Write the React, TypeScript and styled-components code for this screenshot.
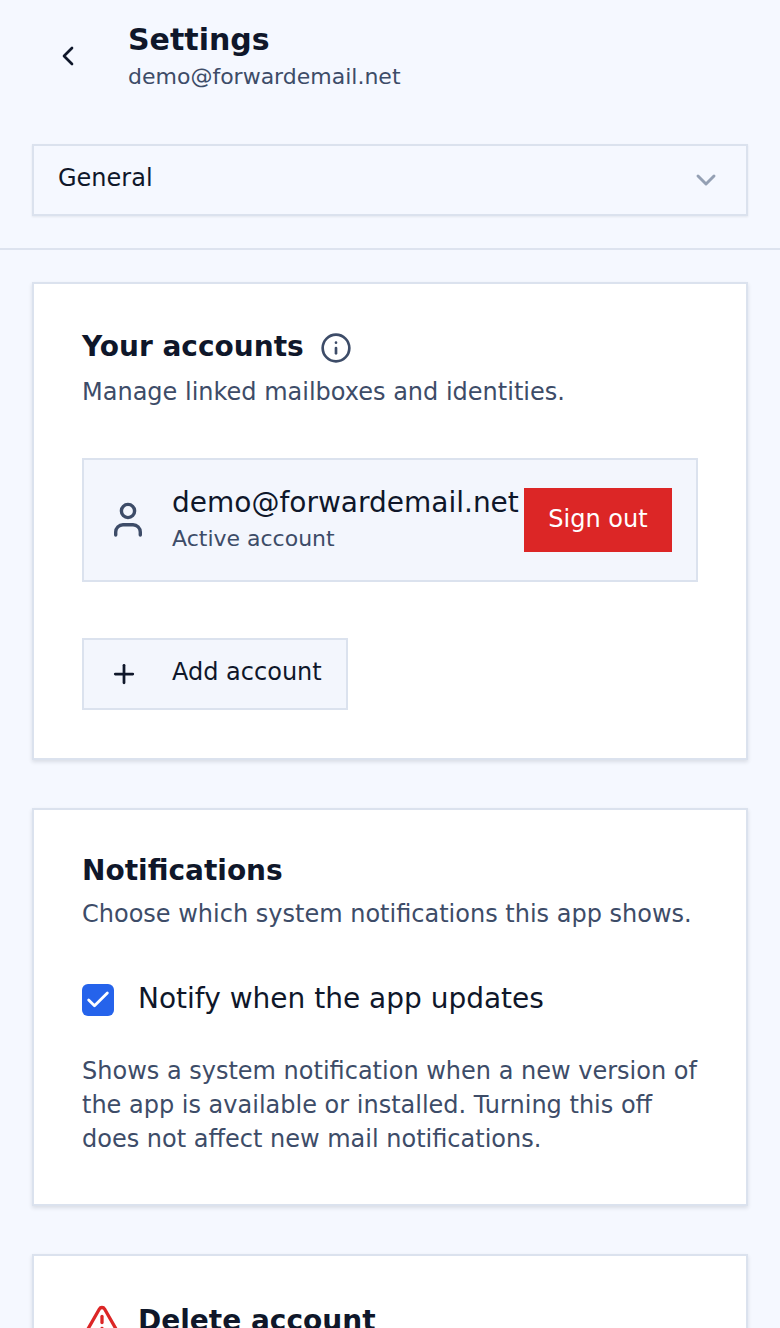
import * as React from 'react';
import styled, { createGlobalStyle } from 'styled-components';
import { ChevronDown, ChevronLeft, Info, Plus, TriangleAlert, Check } from 'lucide-react';

const GlobalStyle = createGlobalStyle`
  html, body {
    margin: 0;
    height: 100%;
    overflow: hidden;
    background: #f5f8ff;
    font-family: 'DejaVu Sans', sans-serif;
  }
  * { box-sizing: border-box; }
`;

const Root = styled.div`
  height: 1328px;
  overflow: hidden;
  background: #f5f8ff;
  color: #0f172a;
`;

const Header = styled.header`
  display: flex;
  align-items: flex-start;
  height: 144px;
  padding: 21px 0 0 48px;
`;

const BackButton = styled.button`
  width: 40px;
  height: 40px;
  margin-top: 15px;
  margin-right: 40px;
  padding: 0;
  display: flex;
  align-items: center;
  justify-content: center;
  background: none;
  border: 0;
  color: #0f172a;
`;

const HeaderText = styled.div`
  display: flex;
  flex-direction: column;
`;

const PageTitle = styled.h1`
  margin: 0;
  font-size: 30px;
  line-height: 38px;
  font-weight: 700;
`;

const PageSubtitle = styled.div`
  margin-top: 2px;
  font-size: 22px;
  line-height: 32px;
  color: #3d4c68;
`;

const SelectBar = styled.div`
  padding: 0 32px 32px;
  border-bottom: 2px solid #dde3ef;
`;

const Select = styled.div`
  height: 72px;
  padding: 0 24px 0 24px;
  display: flex;
  align-items: center;
  justify-content: space-between;
  border: 2px solid #dbe2ee;
  box-shadow: 0 1px 2px rgba(15, 23, 42, 0.08);
  font-size: 24px;
  color: #0f172a;
`;

const SelectValue = styled.span`
  padding-bottom: 4px;
`;

const Content = styled.main`
  display: flex;
  flex-direction: column;
  gap: 48px;
  padding: 32px;
`;

const Card = styled.section`
  padding: 39px 48px 48px;
  background: #fff;
  border: 2px solid #dbe2ee;
  box-shadow: 0 2px 4px rgba(15, 23, 42, 0.12);
`;

const TitleRow = styled.div`
  margin: 2px 0 6px;
  display: flex;
  align-items: center;
  gap: 16px;
`;

const InfoIcon = styled(Info)`
  margin-top: 2px;
`;

const CardTitle = styled.h2`
  margin: 0;
  font-size: 28px;
  line-height: 44px;
  font-weight: 700;
  color: #0f172a;
`;

const CardDescription = styled.p`
  margin: 4px 0 0;
  font-size: 24px;
  line-height: 34px;
  color: #3d4c68;
`;

const AccountRow = styled.div`
  margin-top: 49px;
  height: 124px;
  padding: 0 24px 0 28px;
  display: flex;
  align-items: center;
  background: #f3f6fd;
  border: 2px solid #dbe2ee;
`;

const AccountIcon = styled.svg`
  flex: none;
  width: 32px;
  height: 40px;
  margin-right: 28px;
  color: #3d4c68;
`;

const AccountText = styled.div`
  flex: 1;
  min-width: 0;
  padding-bottom: 2px;
  white-space: nowrap;
`;

const AccountEmail = styled.div`
  font-size: 28px;
  line-height: 40px;
  color: #0f172a;
`;

const AccountStatus = styled.div`
  font-size: 22px;
  line-height: 32px;
  color: #3d4c68;
`;

const SignOutButton = styled.button`
  flex: none;
  width: 148px;
  height: 64px;
  padding: 0 0 3px;
  border: 0;
  background: #dc2626;
  color: #fff;
  font: inherit;
  font-size: 24px;
`;

const AddAccountButton = styled.button`
  margin-top: 56px;
  width: 266px;
  height: 72px;
  padding: 0 0 0 25px;
  display: flex;
  align-items: center;
  gap: 33px;
  background: #f3f6fd;
  border: 2px solid #dbe2ee;
  color: #0f172a;
  font: inherit;
  font-size: 24px;
`;

const AddAccountLabel = styled.span`
  padding-bottom: 4px;
`;

const CheckRow = styled.label`
  margin-top: 48px;
  display: flex;
  align-items: center;
  gap: 24px;
  font-size: 28px;
  line-height: 40px;
  color: #0f172a;
`;

const CheckLabel = styled.span`
  padding-bottom: 2px;
`;

const CheckBox = styled.span`
  width: 32px;
  height: 32px;
  display: flex;
  align-items: center;
  justify-content: center;
  border-radius: 6px;
  background: #2563eb;
  color: #fff;
`;

const HelpText = styled.p`
  margin: 33px 0 0;
  font-size: 24px;
  line-height: 34px;
  color: #3d4c68;
`;

const DangerTitleRow = styled.div`
  margin: 4px 0 0 2px;
  display: flex;
  align-items: center;
  gap: 18px;
  color: #dc2626;
`;

export default function App() {
  return (
    <Root>
      <GlobalStyle />
      <Header>
        <BackButton aria-label="Back">
          <ChevronLeft size={32} strokeWidth={2} />
        </BackButton>
        <HeaderText>
          <PageTitle>Settings</PageTitle>
          <PageSubtitle>demo@forwardemail.net</PageSubtitle>
        </HeaderText>
      </Header>
      <SelectBar>
        <Select>
          <SelectValue>General</SelectValue>
          <ChevronDown size={32} strokeWidth={2.2} color="#94a0b4" />
        </Select>
      </SelectBar>
      <Content>
        <Card>
          <TitleRow>
            <CardTitle>Your accounts</CardTitle>
            <InfoIcon size={32} strokeWidth={2} color="#3d4c68" />
          </TitleRow>
          <CardDescription>Manage linked mailboxes and identities.</CardDescription>
          <AccountRow>
            <AccountIcon viewBox="0 0 32 40" fill="none" stroke="currentColor" strokeWidth="3.4" strokeLinecap="round">
              <circle cx="16" cy="11" r="6.6" />
              <path d="M3.7 35v-3a7.3 7.3 0 0 1 7.3-7.3h10a7.3 7.3 0 0 1 7.3 7.3v3" />
            </AccountIcon>
            <AccountText>
              <AccountEmail>demo@forwardemail.net</AccountEmail>
              <AccountStatus>Active account</AccountStatus>
            </AccountText>
            <SignOutButton>Sign out</SignOutButton>
          </AccountRow>
          <AddAccountButton>
            <Plus size={30} strokeWidth={2.2} />
            <AddAccountLabel>Add account</AddAccountLabel>
          </AddAccountButton>
        </Card>
        <Card>
          <CardTitle>Notifications</CardTitle>
          <CardDescription>Choose which system notifications this app shows.</CardDescription>
          <CheckRow>
            <CheckBox>
              <Check size={28} strokeWidth={2.4} />
            </CheckBox>
            <CheckLabel>Notify when the app updates</CheckLabel>
          </CheckRow>
          <HelpText>
            Shows a system notification when a new version of the app is available or installed. Turning this off does
            not affect new mail notifications.
          </HelpText>
        </Card>
        <Card>
          <DangerTitleRow>
            <TriangleAlert size={36} strokeWidth={2.2} />
            <CardTitle>Delete account</CardTitle>
          </DangerTitleRow>
        </Card>
      </Content>
    </Root>
  );
}
